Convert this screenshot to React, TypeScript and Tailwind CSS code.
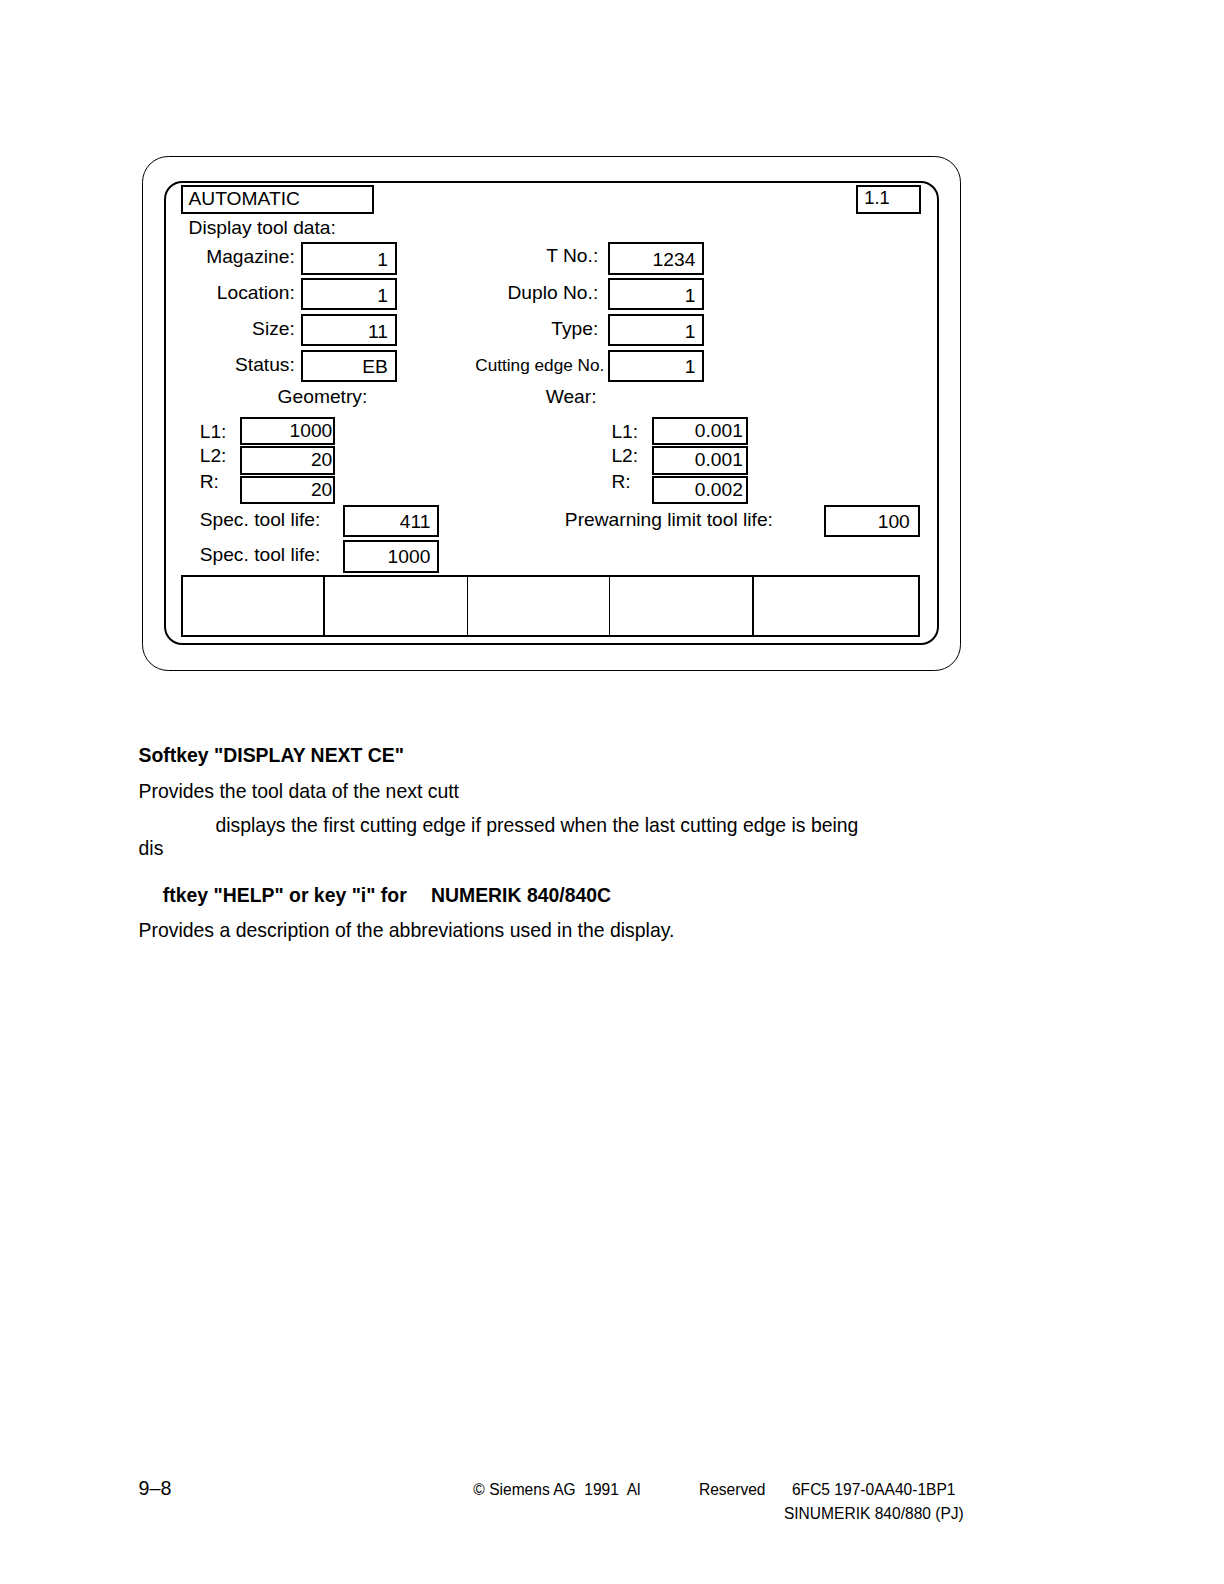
import React from "react";

type BoxProps = { className: string; children?: React.ReactNode };
function Box({ className, children }: BoxProps) {
  return (
    <div className={"border-2 border-black flex items-center justify-end shrink-0 " + className}>
      {children}
    </div>
  );
}

const rows = [
  { l: "Magazine:", v: "1", rl: "T No.:", rv: "1234", rlc: "w-[199px] text-right pb-[5px]", bc: "ml-[10px]" },
  { l: "Location:", v: "1", rl: "Duplo No.:", rv: "1", rlc: "w-[199px] text-right pb-[2px]", bc: "ml-[10px]" },
  { l: "Size:", v: "11", rl: "Type:", rv: "1", rlc: "w-[199px] text-right pb-[2px]", bc: "ml-[10px]" },
  { l: "Status:", v: "EB", rl: "Cutting edge No.", rv: "1", rlc: "w-[205px] text-right text-[17px] pb-[2px]", bc: "ml-[4px]" },
];

const lrows = [
  { l: "L1:", g: "1000", w: "0.001", lc: "mt-[4px]" },
  { l: "L2:", g: "20", w: "0.001", lc: "mt-[-1px]" },
  { l: "R:", g: "20", w: "0.002", lc: "mt-[-5px]" },
];

export default function App() {
  return (
    <div className="[zoom:1.0115] w-[1210px] bg-white text-black font-['Liberation_Sans',Arial,sans-serif] flex flex-col pb-[20px]">
      <div className="pt-[154px] pl-[140px]">
        <div className="w-[810px] h-[509px] border-[1.5px] border-black rounded-[26px] pl-[21.5px] pt-[23.5px]">
          <div className="w-[766px] h-[459px] border-2 border-black rounded-[18px] pl-[14px] pr-[16px] pt-[2px] flex flex-col text-[19px] leading-[22px]">
            <div className="h-[29px] flex justify-between shrink-0">
              <div className="w-[191px] h-[29px] border-2 border-black pl-[6px] flex items-center">AUTOMATIC</div>
              <div className="w-[64px] h-[29px] border-2 border-black pl-[6px] flex items-center pb-[3px] text-[18px]">1.1</div>
            </div>
            <div className="h-[28px] flex items-center pl-[8px] shrink-0">Display tool data:</div>
            <div className="flex flex-col gap-[3.5px] shrink-0">
              {rows.map((r) => (
                <div key={r.l} className="h-[32px] flex items-center">
                  <span className="w-[113px] text-right pb-[2px] shrink-0">{r.l}</span>
                  <Box className="ml-[6px] w-[95px] h-[32px] pr-[7px] pt-[3px]">{r.v}</Box>
                  <span className={"shrink-0 " + r.rlc}>{r.rl}</span>
                  <Box className={r.bc + " w-[95px] h-[32px] pr-[7px] pt-[3px]"}>{r.rv}</Box>
                </div>
              ))}
            </div>
            <div className="h-[34.5px] flex items-center shrink-0">
              <span className="w-[361px] pl-[96px] pb-[5px] shrink-0">Geometry:</span>
              <span className="pb-[5px]">Wear:</span>
            </div>
            <div className="flex flex-col shrink-0">
              {lrows.map((r) => (
                <div key={r.l} className="h-[29px] flex items-start">
                  <span className={"w-[59px] pl-[19px] shrink-0 " + r.lc}>{r.l}</span>
                  <Box className="w-[94px] h-[28px] pr-[1px]">{r.g}</Box>
                  <span className={"ml-[273px] w-[40px] shrink-0 " + r.lc}>{r.l}</span>
                  <Box className="w-[95px] h-[28px] pr-[3px]">{r.w}</Box>
                </div>
              ))}
            </div>
            <div className="flex flex-col gap-[3px] shrink-0">
              <div className="h-[32px] flex items-center">
                <span className="w-[161px] pl-[19px] pb-[3px] shrink-0">Spec. tool life:</span>
                <Box className="w-[95px] h-[32px] pr-[7px] pt-[1px]">411</Box>
                <span className="ml-[124px] w-[256px] pb-[3px] shrink-0">Prewarning limit tool life:</span>
                <Box className="w-[95px] h-[32px] pr-[8px] pt-[1px]">100</Box>
              </div>
              <div className="h-[32px] flex items-center">
                <span className="w-[161px] pl-[19px] pb-[3px] shrink-0">Spec. tool life:</span>
                <Box className="w-[95px] h-[32px] pr-[7px] pt-[1px]">1000</Box>
              </div>
            </div>
            <div className="mt-[2px] h-[61px] w-[731px] border-2 border-black flex shrink-0">
              <div className="w-[141px] border-r-2 border-black" />
              <div className="w-[141px] border-r border-black" />
              <div className="w-[141px] border-r border-black" />
              <div className="w-[142px] border-r-2 border-black" />
              <div className="flex-1" />
            </div>
          </div>
        </div>
      </div>

      <div className="pl-[137px] mt-[73px] text-[19.2px] leading-[22px]">
        <div className="h-[22px] font-bold">Softkey "DISPLAY NEXT CE"</div>
        <div className="h-[22px] mt-[13px]">Provides the tool data of the next cutt</div>
        <div className="h-[22px] mt-[12px] pl-[76px]">displays the first cutting edge if pressed when the last cutting edge is being</div>
        <div className="h-[22px] mt-[1px]">dis</div>
        <div className="h-[22px] mt-[24px] font-bold flex">
          <span className="ml-[24px]">ftkey "HELP" or key "i" for</span>
          <span className="ml-[24px]">NUMERIK 840/840C</span>
        </div>
        <div className="h-[22px] mt-[13px]">Provides a description of the abbreviations used in the display.</div>
      </div>

      <div className="pl-[137px] mt-[529px] flex items-center h-[24px]">
        <span className="w-[331px] text-[19.5px] shrink-0">9–8</span>
        <span className="w-[223px] text-[15.4px] whitespace-pre shrink-0 pt-[2px]">© Siemens AG  1991  Al</span>
        <span className="w-[92px] text-[15.4px] shrink-0 pt-[2px]">Reserved</span>
        <span className="text-[15.4px] shrink-0 pt-[2px]">6FC5 197-0AA40-1BP1</span>
      </div>
      <div className="pl-[775px] mt-[2px] h-[22px] text-[15.4px] leading-[22px]">SINUMERIK 840/880 (PJ)</div>
    </div>
  );
}
